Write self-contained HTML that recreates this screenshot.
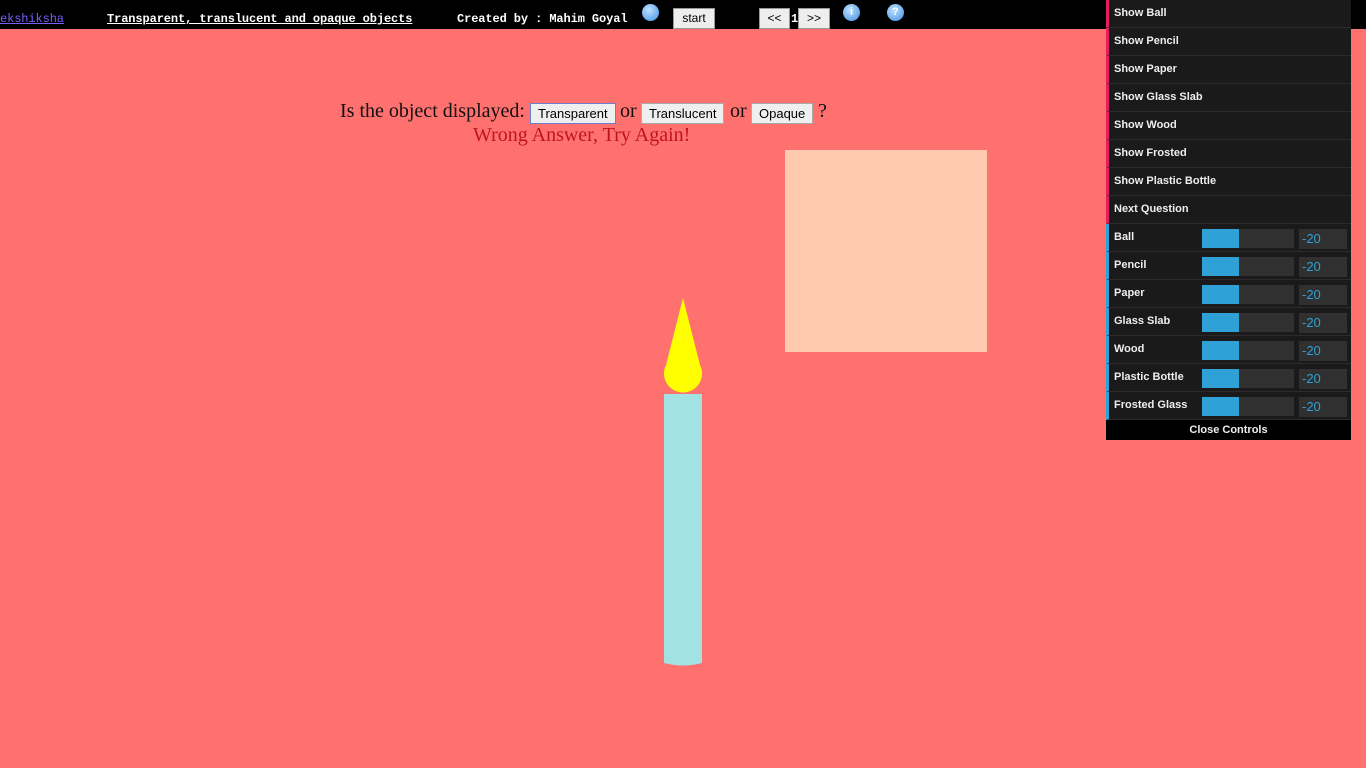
<!DOCTYPE html>
<html><head><style>
body{margin:0;width:1366px;height:768px;background:#ff716e;position:relative;overflow:hidden;font-family:"Liberation Sans",sans-serif}
#bar{position:absolute;left:0;top:0;width:1366px;height:29px;background:#000}
.t{position:absolute;top:12px;font:bold 12px "Liberation Mono",monospace;color:#fff;letter-spacing:-0.1px}
.btn{position:absolute;background:#eee;border:1px solid #999;font:12px "Liberation Sans",sans-serif;color:#000;text-align:center;box-sizing:border-box}
.circ{position:absolute;width:17px;height:17px;border-radius:50%;background:radial-gradient(circle at 40% 35%,#bfe0ff,#3d8fe0);color:#fff;font:bold 11px sans-serif;text-align:center;line-height:17px}
#panel{position:absolute;left:1106px;top:0;width:245px;background:#1a1a1a}
.row{height:27px;border-bottom:1px solid #2c2c2c;border-left:3px solid #e61d5f;color:#eee;font:bold 11px "Liberation Sans",sans-serif;line-height:27px;padding-left:5px;position:relative}
.row.n{border-left-color:#2fa1d6}
.sl{position:absolute;left:93px;top:5px;width:92px;height:19px;background:#303030}
.sl i{display:block;width:37px;height:19px;background:#2fa1d6}
.v{position:absolute;left:190px;top:5px;width:48px;height:20px;background:#303030;color:#2fa1d6;font:13px "Liberation Sans",sans-serif;line-height:20px;padding-left:3px;box-sizing:border-box;font-weight:normal}
#close{height:20px;background:#000;color:#eee;font:bold 11px "Liberation Sans",sans-serif;text-align:center;line-height:20px}
.q{position:absolute;font:20px "Liberation Serif",serif;color:#111}
.qb{position:absolute;top:103px;height:21px;background:#efefef;border:1px solid #aaa;font:13px "Liberation Sans",sans-serif;line-height:19px;padding:0 7px;box-sizing:border-box}
</style></head><body>
<div id="bar"></div>
<div class="t" style="left:0;color:#7a5cff;text-decoration:underline;font-weight:normal">ekshiksha</div>
<div class="t" style="left:107px;text-decoration:underline">Transparent, translucent and opaque objects</div>
<div class="t" style="left:457px">Created by : Mahim Goyal</div>
<div class="circ" style="left:642px;top:4px"></div>
<div class="btn" style="left:673px;top:8px;width:42px;height:21px;line-height:19px">start</div>
<div class="btn" style="left:759px;top:8px;width:31px;height:21px;line-height:19px">&lt;&lt;</div>
<div class="t" style="left:791px">1</div>
<div class="btn" style="left:798px;top:8px;width:32px;height:21px;line-height:19px">&gt;&gt;</div>
<div class="circ" style="left:843px;top:4px">i</div>
<div class="circ" style="left:887px;top:4px">?</div>

<div class="q" style="left:340px;top:100px">Is the object displayed:</div>
<div class="qb" style="left:530px;border-color:#6a7fd0">Transparent</div>
<div class="q" style="left:620px;top:100px">or</div>
<div class="qb" style="left:641px">Translucent</div>
<div class="q" style="left:730px;top:100px">or</div>
<div class="qb" style="left:751px">Opaque</div>
<div class="q" style="left:818px;top:100px">?</div>
<div class="q" style="left:473px;top:124px;color:#c0141c">Wrong Answer, Try Again!</div>

<div style="position:absolute;left:785px;top:150px;width:202px;height:202px;background:#ffcaaf"></div>

<svg style="position:absolute;left:660px;top:295px" width="46" height="375">
<path d="M23 3 L6 70 A19 19 0 1 0 40 70 Z" fill="#ffff00"/>
<path d="M4 99 L42 99 L42 368 Q23 373 4 368 Z" fill="#a2e2e2"/>
</svg>

<div id="panel">
<div class="row">Show Ball</div>
<div class="row">Show Pencil</div>
<div class="row">Show Paper</div>
<div class="row">Show Glass Slab</div>
<div class="row">Show Wood</div>
<div class="row">Show Frosted</div>
<div class="row">Show Plastic Bottle</div>
<div class="row">Next Question</div>
<div class="row n">Ball<div class="sl"><i></i></div><div class="v">-20</div></div>
<div class="row n">Pencil<div class="sl"><i></i></div><div class="v">-20</div></div>
<div class="row n">Paper<div class="sl"><i></i></div><div class="v">-20</div></div>
<div class="row n">Glass Slab<div class="sl"><i></i></div><div class="v">-20</div></div>
<div class="row n">Wood<div class="sl"><i></i></div><div class="v">-20</div></div>
<div class="row n">Plastic Bottle<div class="sl"><i></i></div><div class="v">-20</div></div>
<div class="row n">Frosted Glass<div class="sl"><i></i></div><div class="v">-20</div></div>
<div id="close">Close Controls</div>
</div>
</body></html>
